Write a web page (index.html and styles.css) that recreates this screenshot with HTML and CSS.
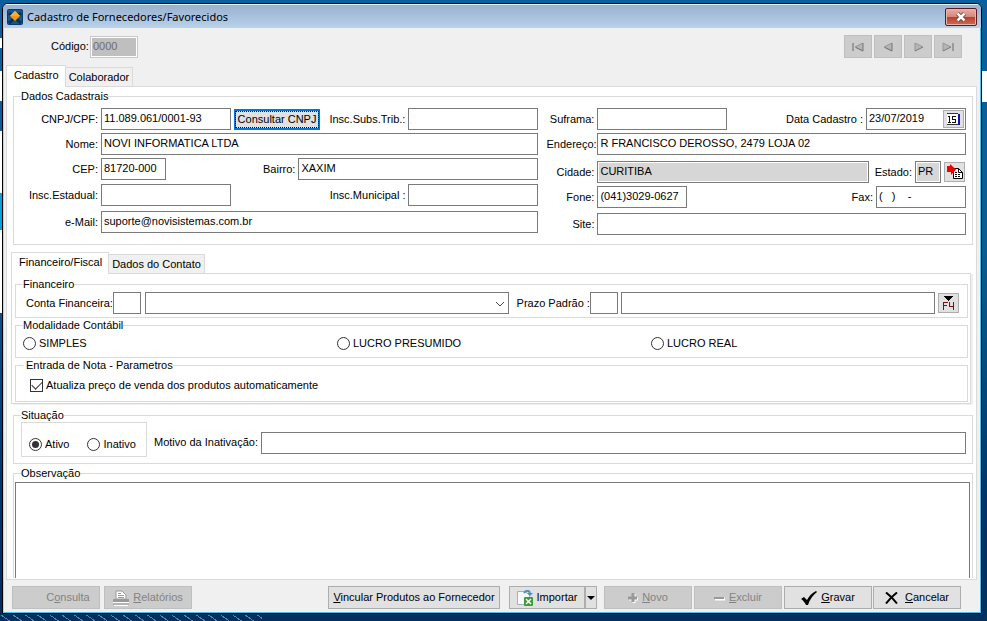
FILE: index.html
```html
<!DOCTYPE html>
<html lang="pt-BR">
<head>
<meta charset="utf-8">
<title>Cadastro de Fornecedores/Favorecidos</title>
<link rel="stylesheet" href="styles.css">
</head>
<body>
<div class="window">
  <header class="titlebar">
    <svg class="app-icon" width="16" height="16" viewBox="0 0 16 16" aria-hidden="true">
      <rect width="16" height="16" rx="2" fill="#0c3a66"/>
      <rect x="1" y="1" width="14" height="14" rx="1" fill="#14578f"/>
      <path d="M2 4L14 14M2 14L14 4" stroke="#0b3157" stroke-width="3"/>
      <path d="M8 2L13 7L8 12L3 7Z" fill="#f9960f"/>
      <path d="M8 2L13 7H3Z" fill="#ffad2b"/>
    </svg>
    <h1>Cadastro de Fornecedores/Favorecidos</h1>
    <button class="close" type="button" aria-label="Fechar">
      <svg width="12" height="10" viewBox="0 0 12 10"><path d="M2.500 1.500L9.500 8.500M9.500 1.500L2.500 8.500" stroke="#6b2f35" stroke-width="4"/><path d="M2.500 1.500L9.500 8.500M9.500 1.500L2.500 8.500" stroke="#fff" stroke-width="2.500"/></svg>
    </button>
  </header>

  <form class="client">
    <div class="toolbar">
      <label for="codigo">Código:</label>
      <input id="codigo" class="codigo" value="0000" disabled>
      <div class="nav">
        <button type="button" aria-label="Primeiro"><svg width="14" height="10" viewBox="0 0 14 10"><path d="M2 1V9" stroke="#8a8a8a" stroke-width="1.500"/><path d="M12 1V9L4 5Z" fill="#b5b5b5"/><path d="M12 1L4 5L12 9" fill="none" stroke="#969696"/><path d="M12 1V9L5 5.500" fill="none" stroke="#777"/></svg></button>
        <button type="button" aria-label="Anterior"><svg width="14" height="10" viewBox="0 0 14 10"><path d="M11 1V9L3 5Z" fill="#b5b5b5"/><path d="M11 1L3 5L11 9" fill="none" stroke="#969696"/><path d="M11 1V9L4 5.500" fill="none" stroke="#777"/></svg></button>
        <button type="button" aria-label="Próximo"><svg width="14" height="10" viewBox="0 0 14 10"><path d="M4 1V9L12 5Z" fill="#b5b5b5"/><path d="M4 9V1L12 5" fill="none" stroke="#969696"/><path d="M4 9L12 5" stroke="#777"/></svg></button>
        <button type="button" aria-label="Último"><svg width="14" height="10" viewBox="0 0 14 10"><path d="M12 1V9" stroke="#8a8a8a" stroke-width="1.500"/><path d="M2 1V9L10 5Z" fill="#b5b5b5"/><path d="M2 9V1L10 5" fill="none" stroke="#969696"/><path d="M2 9L10 5" stroke="#777"/></svg></button>
      </div>
    </div>

    <div class="tabs">
      <button class="tab active" type="button">Cadastro</button>
      <button class="tab" type="button">Colaborador</button>
    </div>

    <main class="page">
      <fieldset class="group dados">
        <legend>Dados Cadastrais</legend>
        <div class="col left">
          <div class="row"><label for="cnpj">CNPJ/CPF:</label>
            <input id="cnpj" class="w130" value="11.089.061/0001-93">
            <button class="btn focused" type="button"><span>Consultar CNPJ</span></button>
            <label class="push" for="subs">Insc.Subs.Trib.:</label><input id="subs" class="w130"></div>
          <div class="row"><label for="nome">Nome:</label><input id="nome" class="fill" value="NOVI INFORMATICA LTDA"></div>
          <div class="row"><label for="cep">CEP:</label><input id="cep" class="w65" value="81720-000">
            <label class="push" for="bairro">Bairro:</label><input id="bairro" class="w240" value="XAXIM"></div>
          <div class="row"><label for="ie">Insc.Estadual:</label><input id="ie" class="w130">
            <label class="push" for="im">Insc.Municipal :</label><input id="im" class="w130"></div>
          <div class="row"><label for="email">e-Mail:</label><input id="email" class="fill" value="suporte@novisistemas.com.br"></div>
        </div>
        <div class="col right">
          <div class="row"><label for="suframa">Suframa:</label><input id="suframa" class="w130">
            <label class="push" for="data">Data Cadastro :</label>
            <div class="datebox"><input id="data" value="23/07/2019"><button type="button" aria-label="Calendário"><svg width="13" height="13" viewBox="0 0 13 13" shape-rendering="crispEdges"><rect width="11" height="12" fill="#fff"/><path d="M0 0.500H11M0 11.500H12" stroke="#333"/><path d="M12 1V12" stroke="#1414a0" stroke-width="2"/><path d="M1 3.500H3M2.500 3V9M1 9.500H4M9 3.500H5.500V6H8.500V9.500H5" fill="none" stroke="#111"/></svg></button></div></div>
          <div class="row"><label for="endereco">Endereço:</label><input id="endereco" class="fill" value="R FRANCISCO DEROSSO, 2479 LOJA 02"></div>
          <div class="row"><label for="cidade">Cidade:</label><input id="cidade" class="fill locked" value="CURITIBA" readonly>
            <label class="estado" for="uf">Estado:</label><input id="uf" class="w26 locked" value="PR" readonly>
            <button class="icon-btn" type="button" aria-label="Buscar cidade"><svg width="18" height="16" viewBox="0 0 18 16"><path d="M7.500 4.500H12.500L16.500 8.500V14.500H7.500Z" fill="#fff" stroke="#000"/><path d="M12.500 4.500V8.500H16.500" fill="none" stroke="#000"/><path d="M9 8.500H11M9 10.500H15M9 12.500H15" stroke="#000" stroke-dasharray="2 1"/><path d="M1 2H4V0L10 5.500L5 11V8H1Z" fill="#f00000"/></svg></button></div>
          <div class="row"><label for="fone">Fone:</label><input id="fone" class="w90" value="(041)3029-0627">
            <label class="push" for="fax">Fax:</label><input id="fax" class="w90" value="(&nbsp;&nbsp; )&nbsp;&nbsp;&nbsp; -"></div>
          <div class="row"><label for="site">Site:</label><input id="site" class="fill"></div>
        </div>
      </fieldset>

      <div class="tabs inner">
        <button class="tab active" type="button">Financeiro/Fiscal</button>
        <button class="tab" type="button">Dados do Contato</button>
      </div>
      <section class="subpage">
        <fieldset class="group financeiro">
          <legend>Financeiro</legend>
          <label for="conta">Conta Financeira:</label>
          <input id="conta" class="w28">
          <div class="combo"><select aria-label="Nome da conta"><option></option></select>
            <svg width="10" height="6" viewBox="0 0 10 6"><path d="M1 1L5 5L9 1" fill="none" stroke="#444"/></svg></div>
          <label for="prazo">Prazo Padrão :</label>
          <input id="prazo" class="w28">
          <input class="fill" aria-label="Descrição do prazo">
          <button class="icon-btn" type="button" aria-label="F4"><svg width="13" height="16" viewBox="0 0 13 16" shape-rendering="crispEdges"><path d="M2 1H11L6.500 6Z" fill="#000"/><path d="M6 7.500H1.500V15M1 10.500H5M7.500 7V11.500H12M11.500 7V15" fill="none" stroke="#7d0a14"/></svg></button>
        </fieldset>
        <fieldset class="group modalidade">
          <legend>Modalidade Contábil</legend>
          <label><input type="radio" name="modalidade">SIMPLES</label>
          <label><input type="radio" name="modalidade">LUCRO PRESUMIDO</label>
          <label><input type="radio" name="modalidade">LUCRO REAL</label>
        </fieldset>
        <fieldset class="group entrada">
          <legend>Entrada de Nota - Parametros</legend>
          <label><input type="checkbox" checked>Atualiza preço de venda dos produtos automaticamente</label>
        </fieldset>
      </section>

      <fieldset class="group situacao">
        <legend>Situação</legend>
        <div class="status">
          <label><input type="radio" name="status" checked>Ativo</label>
          <label><input type="radio" name="status">Inativo</label>
        </div>
        <label for="motivo">Motivo da Inativação:</label>
        <input id="motivo" class="fill">
      </fieldset>

      <fieldset class="group observacao">
        <legend>Observação</legend>
        <textarea aria-label="Observação"></textarea>
      </fieldset>
    </main>

    <footer class="actions">
      <button class="btn consulta" type="button" disabled><span>C<u>o</u>nsulta</span></button>
      <button class="btn" type="button" disabled><svg width="16" height="16" viewBox="0 0 16 16"><path d="M3 9V1H9L13 5V9Z" fill="#fff" stroke="#999"/><path d="M5 3.500H8M5 5.500H11M5 7.500H11" stroke="#999"/><path d="M0 9H16V12H0Z" fill="#999"/><path d="M0 12.500H16M1 15.500H15" stroke="#fff"/><path d="M0 14H16" stroke="#999" stroke-width="1"/></svg><span><u>R</u>elatórios</span></button>
      <button class="btn vincular" type="button"><span><u>V</u>incular Produtos ao Fornecedor</span></button>
      <button class="btn importar" type="button"><svg width="16" height="16" viewBox="0 0 16 16"><path d="M0.500 1.500H8L12.500 5V14.500H0.500Z" fill="#f7f9fa" stroke="#a9b0b5"/><path d="M7 3C9 0 12 0 13 3" fill="none" stroke="#4d91ca" stroke-width="2"/><path d="M10 3H16L13 6Z" fill="#4d91ca"/><rect x="7" y="7" width="9" height="9" rx="1" fill="#3d9b35"/><path d="M9 9L14 14M14 9L9 14" stroke="#fff" stroke-width="1.500"/></svg><span>Importar</span></button>
      <button class="btn drop" type="button" aria-label="Opções de importação"><svg width="8" height="4" viewBox="0 0 8 4"><path d="M0 0H8L4 4Z"/></svg></button>
      <button class="btn novo" type="button" disabled><svg width="10" height="10" viewBox="0 0 10 10"><path d="M6 1V10M1 6H10" stroke="#fff" stroke-width="3"/><path d="M5 0V9M0 5H9" stroke="#999" stroke-width="3"/></svg><span><u>N</u>ovo</span></button>
      <button class="btn" type="button" disabled><svg width="11" height="10" viewBox="0 0 11 10"><path d="M1 6H11" stroke="#fff" stroke-width="3"/><path d="M0 5H10" stroke="#999" stroke-width="2"/></svg><span><u>E</u>xcluir</span></button>
      <button class="btn gravar" type="button"><svg width="16" height="14" viewBox="0 0 16 14"><path d="M0 8L3 6L6 9C8 5 11 2 15 0L16 1C12 4 9 8 7 14H5C4 12 2 9 0 8Z"/></svg><span><u>G</u>ravar</span></button>
      <button class="btn cancelar" type="button"><svg width="13" height="12" viewBox="0 0 13 12"><path d="M1 0.500Q7 5 12 11.500M12 0.500Q6 5 1 11.500" fill="none" stroke="#000" stroke-width="2"/></svg><span><u>C</u>ancelar</span></button>
    </footer>
  </form>
</div>
</body>
</html>
```
FILE: styles.css
```css
* { box-sizing: border-box; }

body {
  margin: 0;
  min-height: 100vh;
  padding: 3px 5px 7px 2px;
  display: flex;
  font: 11px/13px "Liberation Sans", Arial, sans-serif;
  color: #000;
  background:
    linear-gradient(#fff, #fff) right 71px / 5px 31px no-repeat,
    linear-gradient(#fff, #fff) 0 38px / 2px 10px no-repeat,
    linear-gradient(#fff, #fff) 0 71px / 2px 30px no-repeat,
    linear-gradient(#0aa0d8, #0aa0d8) 0 193px / 2px 37px no-repeat,
    linear-gradient(#fff, #fff) 0 131px / 2px 182px no-repeat,
    repeating-linear-gradient(35deg, transparent 0 5px, #4f86b8 5px 6px, transparent 6px 7px) 0 bottom / 262px 6px no-repeat,
    linear-gradient(#0b5f9f, #0d5b94 40%, #01356a 80%, #01305f);
}

button, input, select, textarea { font: inherit; color: inherit; margin: 0; border-radius: 0; }
button { padding: 0; }
svg { display: block; flex: none; }
label { white-space: nowrap; }

.window {
  flex: 1;
  min-width: 0;
  display: flex;
  flex-direction: column;
  border: 1px solid #000;
  border-radius: 6px 6px 0 0;
  background: #f0f0f0;
  overflow: hidden;
}

.titlebar {
  height: 24px;
  display: flex;
  align-items: center;
  gap: 4px;
  padding: 0 4px;
  border-top: 1px solid #e8f2fb;
  background: linear-gradient(#97b2d0, #b9d1ea);
}
.titlebar h1 {
  margin: 0;
  flex: 1;
  font: 11px/16px "Noto Sans", "Open Sans", sans-serif;
}
.close {
  width: 32px;
  height: 18px;
  display: grid;
  place-items: center;
  border: 1px solid #5b1920;
  border-radius: 2px;
  background: linear-gradient(#e9aea4, #d6887b 48%, #b8402a 50%, #cd6b52);
  box-shadow: inset 0 0 0 1px #e6b4aa;
}

.client {
  flex: 1;
  display: flex;
  flex-direction: column;
  padding: 0 3px 0 2px;
  border: solid #45c5ee;
  border-width: 0 1px 1px 0;
  border-left: 1px solid #b9d1ea;
}

.toolbar {
  height: 37px;
  display: flex;
  align-items: center;
  gap: 1px;
  padding: 0 15px 0 45px;
}
.nav { margin-left: auto; display: flex; gap: 2px; }
.nav button {
  width: 28px;
  height: 23px;
  display: grid;
  place-items: center;
  border: 1px solid #bfbfbf;
  background: #ccc;
}

.tabs { display: flex; align-items: flex-end; height: 21px; }
.tab {
  height: 19px;
  padding: 0 3px;
  border: 1px solid #dadada;
  border-left: 0;
  border-bottom: 0;
  background: #f0f0f0;
}
.tab.active {
  height: 22px;
  margin-bottom: -1px;
  padding: 0 6px 3px 7px;
  border-left: 1px solid #dadada;
  background: #fff;
  z-index: 1;
}

.page {
  flex: 1;
  display: flex;
  flex-direction: column;
  padding: 3px 3px 1px 6px;
  border: 1px solid #dadada;
  background: #fff;
}

.group { margin: 0; padding: 0; min-width: 0; border: 1px solid #dadada; }
.group legend { margin-left: 7px; padding: 0; height: 13px; }

input, select, textarea {
  height: 22px;
  padding: 0 2px 2px;
  border: 1px solid #7a7a7a;
  background: #fff;
  outline: none;
  min-width: 0;
}
.fill { flex: 1; }
.w26 { width: 26px; }
.w28 { width: 28px; }
.w65 { width: 65px; }
.w90 { width: 90px; }
.w130 { width: 130px; }
.w240 { width: 240px; }
.locked { background: #d6d6d6; box-shadow: inset 0 0 0 1px #fff; }
.codigo {
  width: 48px;
  border: 1px solid #c8c8c8;
  background: #bfbfbf;
  color: #6d6d6d;
  box-shadow: inset 0 0 0 1px #fff;
}

.dados {
  display: grid;
  grid-template-columns: 525fr 420fr;
  gap: 8px;
  padding: 5px 6px 9px 0;
}
.col { display: grid; align-items: start; }
.left { grid-template-rows: 25px 25px 26px 27px 22px; }
.right { grid-template-rows: 25px 28px 25px 27px 22px; }
.row { display: flex; align-items: center; gap: 3px; }
.row > label:first-child { width: 84px; text-align: right; }
.right .row > label:first-child { width: 48px; }
.push { margin-left: auto; }
.estado { margin-left: 3px; }

.btn {
  height: 23px;
  display: flex;
  align-items: center;
  justify-content: center;
  gap: 4px;
  border: 1px solid #adadad;
  background: #e1e1e1;
  white-space: nowrap;
}
.btn:disabled { background: #ccc; border-color: #bfbfbf; color: #838383; }
.btn.focused { width: 86px; height: 21px; border: 2px solid #0078d7; }
.focused span { border: 1px dotted #000; padding: 1px 2px; }

.datebox {
  width: 100px;
  height: 22px;
  display: flex;
  align-items: center;
  padding-right: 1px;
  border: 1px solid #7a7a7a;
}
.datebox input { flex: 1; height: 20px; border: 0; }
.datebox button, .icon-btn {
  width: 21px;
  height: 20px;
  display: grid;
  place-items: center;
  border: 1px solid #adadad;
  background: #e1e1e1;
}
.datebox button { height: 18px; }
.row .icon-btn { margin-right: 1px; }

.tabs.inner { margin: 7px 0 0 -2px; }
.subpage {
  margin: 0 2px 0 -2px;
  padding: 4px 2px 1px 3px;
  border: 1px solid #dadada;
  box-shadow: 2px 1px 0 #f0f0f0;
}
.financeiro { display: flex; align-items: center; gap: 3px; padding: 1px 8px 3px 10px; }
.combo { position: relative; flex: 366; margin: 0 5px 0 1px; display: flex; }
.combo select { width: 100%; appearance: none; }
.combo svg { position: absolute; right: 4px; top: 9px; pointer-events: none; }
.financeiro .fill { flex: 310; }
.financeiro legend ~ label { margin-right: -3px; }
.group.financeiro legend { margin-left: -3px; }

.modalidade { display: grid; grid-template-columns: repeat(3, 1fr); margin-top: 1px; padding: 5px 2px 7px 7px; }
.entrada { margin-top: 1px; padding: 7px 14px 9px; }
.group.modalidade legend, .group.situacao legend { margin-left: 0; }
.group.entrada legend { margin-left: -7px; padding: 0 0 0 3px; }
.modalidade label, .entrada label, .status label { display: flex; align-items: center; gap: 3px; }

input[type="radio"], input[type="checkbox"] {
  appearance: none;
  width: 13px;
  height: 13px;
  padding: 0;
  border: 1px solid #333;
  display: grid;
  place-items: center;
}
input[type="radio"] { border-radius: 50%; }
input[type="radio"]:checked::after { content: ""; width: 7px; height: 7px; border-radius: 50%; background: #333; }
input[type="checkbox"]:checked::after {
  content: "";
  width: 9px;
  height: 5px;
  margin-bottom: 3px;
  border: solid #333;
  border-width: 0 0 1px 1px;
  transform: rotate(-45deg);
}

.situacao { margin-top: 5px; display: flex; align-items: center; gap: 3px; padding: 0 6px 6px 7px; }
.status {
  width: 126px;
  height: 35px;
  display: flex;
  align-items: flex-end;
  gap: 18px;
  padding: 0 7px 5px;
  border: 1px solid #dadada;
}
.situacao > label { margin: 6px 0 0 4px; }
.situacao > .fill { margin-top: 6px; }

.observacao {
  flex: 1;
  display: flex;
  margin-top: 3px;
  padding: 2px 2px 0 1px;
  border-bottom: 0;
}
.group.observacao legend { margin-left: 6px; }
.observacao textarea { flex: 1; height: auto; min-height: 95px; border-bottom: 0; resize: none; }

.actions { display: flex; padding: 6px 16px 3px 6px; gap: 2px; }
.actions .btn { width: 88px; }
.actions .consulta { padding-left: 24px; margin-right: 2px; }
.actions .vincular { width: 172px; margin-left: auto; }
.actions .importar { width: 76px; margin-left: 7px; }
.actions .drop { width: 12px; margin-left: -2px; }
.actions .novo { margin-left: 5px; }
.actions .cancelar { margin-left: -1px; gap: 7px; }
```
